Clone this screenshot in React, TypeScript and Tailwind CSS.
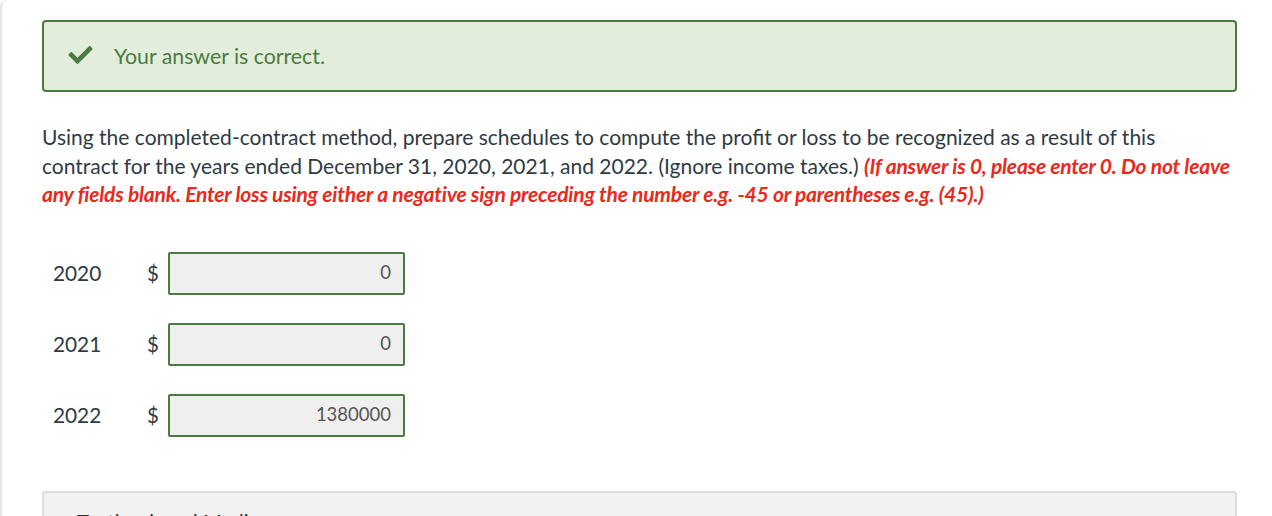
import { FaCheck } from 'react-icons/fa';

const rows = [
  { year: '2020', value: '0' },
  { year: '2021', value: '0' },
  { year: '2022', value: '1380000' },
];

export default function App() {
  return (
    <div className="h-[516px] overflow-hidden bg-white font-['Lato','Liberation_Sans',sans-serif] text-[#2d3b45]">
      <div className="min-h-[516px] rounded-tl-lg border-l-2 border-[#e3e3e3] pt-[20px] pl-[40px] pr-[35px]">
        {/* feedback */}
        <div className="flex h-[72px] items-center rounded-[4px] border-2 border-[#4b7b40] bg-[#e2eddb] pl-[22px] text-[#4b7b40]">
          <FaCheck className="mt-[-2px] h-[24px] w-[29px]" />
          <span className="ml-[19px] mt-[2px] text-[21.3px]">Your answer is correct.</span>
        </div>

        <p className="mt-[31px] whitespace-nowrap text-[21px] leading-[28.5px]">
          Using the completed-contract method, prepare schedules to compute the profit or loss to be recognized as a result of this
          <br />
          contract for the years ended December 31, 2020, 2021, and 2022. (Ignore income taxes.){' '}
          <span className="font-bold italic tracking-[-0.01em] text-[#e8291c]">
            (If answer is 0, please enter 0. Do not leave
            <br />
            any fields blank. Enter loss using either a negative sign preceding the number e.g. -45 or parentheses e.g. (45).)
          </span>
        </p>

        <div className="mt-[43px] flex flex-col gap-[28px]">
          {rows.map(r => (
            <div key={r.year} className="flex items-center">
              <span className="w-[105px] pl-[11px] text-[20.8px]">{r.year}</span>
              <span className="w-[21px] text-[20.4px]">$</span>
              <div className="flex h-[43px] w-[237px] items-center justify-end rounded-[2px] border-2 border-[#4b7b40] bg-[#efefef] pr-[12px] text-[18.5px] text-[#555]">
                {r.value}
              </div>
            </div>
          ))}
        </div>

        <div className="mt-[54px] h-[60px] rounded-t-[4px] border-2 border-[#dcdcdc] bg-[#f2f2f2] pt-[14px] pl-[33px] text-[20.4px] text-[#333]">
          Textbook and Media
        </div>
      </div>
    </div>
  );
}
